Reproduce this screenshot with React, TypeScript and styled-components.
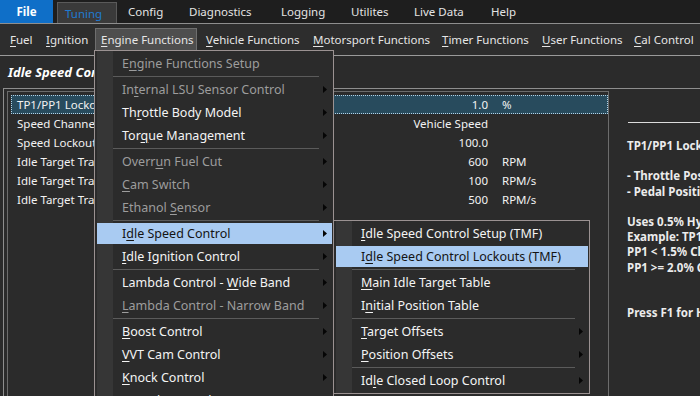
import React from 'react';
import styled, { createGlobalStyle, css } from 'styled-components';

const FONT = `"Noto Sans", "Open Sans", "DejaVu Sans", sans-serif`;

const GlobalStyle = createGlobalStyle`
  html, body { margin: 0; padding: 0; background: #2b2b2b; }
  body { font-family: ${FONT}; font-size: 11.5px; color: #f0f0f0; }
  *, *::before, *::after { box-sizing: border-box; }
  #root { width: 700px; height: 396px; overflow: hidden; }
`;

const Screen = styled.div`
  position: relative;
  width: 700px;
  height: 396px;
  overflow: hidden;
  background: #2b2b2b;
  display: flex;
  flex-direction: column;
`;

const TopBar = styled.div`
  flex: none;
  height: 24px;
  background: #1e1e1e;
  border-bottom: 1px solid #8e8e8e;
  display: flex;
  align-items: flex-end;
`;

const FileTab = styled.div`
  align-self: stretch;
  width: 53px;
  background: #0f6fc8;
  color: #ffffff;
  font-weight: 700;
  font-size: 11.5px;
  display: flex;
  align-items: center;
  justify-content: center;
`;

const TuningTab = styled.div`
  margin-left: 4px;
  width: 60px;
  height: 21px;
  background: #3a3a3a;
  border: 1px solid #5a5a5a;
  border-bottom: none;
  color: #1f7bd2;
  padding-left: 7px;
  display: flex;
  align-items: center;
`;

const TopItem = styled.div<{ $w: number }>`
  width: ${p => p.$w}px;
  height: 23px;
  padding-left: 11px;
  display: flex;
  align-items: center;
  color: #e4e4e4;
  white-space: nowrap;
`;

const ToolBar = styled.div`
  flex: none;
  height: 32px;
  background: #2d2d2d;
  border-bottom: 1px solid #9a9a9a;
  display: flex;
  align-items: flex-start;
  padding: 4px 0 0 4px;
`;

const ToolItem = styled.div<{ $w: number; $open?: boolean }>`
  flex: none;
  width: ${p => p.$w}px;
  height: 23px;
  padding-left: 6px;
  display: flex;
  align-items: center;
  white-space: nowrap;
  color: #e6e6e6;
  ${p =>
    p.$open &&
    css`
      background: #4e4e4e;
      border: 1px solid #6e6e6e;
      padding-left: 5px;
      margin-right: 3px;
    `}
`;

const Key = styled.u`
  text-decoration: underline;
  text-decoration-thickness: 1px;
  text-underline-offset: 2px;
`;

const Content = styled.div`
  flex: 1;
  display: flex;
  flex-direction: column;
  min-height: 0;
`;

const Title = styled.div`
  flex: none;
  height: 32px;
  padding-left: 8px;
  display: flex;
  align-items: center;
  font-weight: 700;
  font-style: italic;
  font-size: 13px;
  color: #ffffff;
  white-space: nowrap;
`;

const Panel = styled.div`
  flex: 1;
  min-height: 0;
  margin-left: 3px;
  border-top: 1px solid #8e8e8e;
  border-left: 1px solid #8e8e8e;
  display: flex;
  padding: 2px 0 0 3px;
`;

const GridBox = styled.div`
  flex: none;
  width: 602px;
  border: 1px solid #6c6c6c;
  border-bottom: none;
  padding: 3px 0 0 3px;
`;

const Row = styled.div<{ $selected?: boolean }>`
  height: 19px;
  display: grid;
  grid-template-columns: 351px 120px 1fr;
  align-items: center;
  padding-left: 6px;
  font-size: 11.5px;
  color: #f2f2f2;
  white-space: nowrap;
  ${p =>
    p.$selected &&
    css`
      background: #284b5d;
      outline: 1px dotted #b3d2e6;
      outline-offset: -1px;
    `}
`;

const Value = styled.span`
  text-align: right;
`;

const Unit = styled.span`
  padding-left: 14px;
`;

const Help = styled.div`
  flex: 1;
  min-width: 0;
  overflow: hidden;
  padding: 31px 0 0 18px;
`;

const HelpRule = styled.div`
  height: 1px;
  margin-left: 1px;
  background: #dcdcdc;
`;

const HelpText = styled.div`
  margin-top: 15px;
  font-weight: 700;
  line-height: 15.2px;
  white-space: pre;
  color: #ececec;
`;

const Menu = styled.div<{ $left: number; $top: number; $width: number }>`
  position: absolute;
  left: ${p => p.$left}px;
  top: ${p => p.$top}px;
  width: ${p => p.$width}px;
  z-index: 10;
  border: 1px solid #9b9292;
  padding: 1px 1px 1px 2px;
  background:
    linear-gradient(to right, transparent 2px, #363636 2px, #363636 18px, transparent 18px),
    #2b2b2b;
`;

const MenuItem = styled.div<{ $disabled?: boolean; $active?: boolean }>`
  height: 23px;
  display: flex;
  align-items: center;
  padding-left: 25px;
  white-space: nowrap;
  font-size: 12.5px;
  color: ${p => (p.$active ? '#141414' : p.$disabled ? '#9d9d9d' : '#f4f4f4')};
  background: ${p =>
    p.$active
      ? 'linear-gradient(transparent 1px, #a9cbf2 1px, #a9cbf2 22px, transparent 22px)'
      : 'transparent'};
`;

const ArrowIcon = styled.svg`
  margin-left: auto;
  margin-right: 5px;
  flex: none;
`;

const SubArrow = () => (
  <ArrowIcon width="4" height="7" viewBox="0 0 4 7">
    <polygon points="0,0 4,3.5 0,7" fill="#050505" />
  </ArrowIcon>
);

const Separator = styled.div`
  height: 1px;
  margin: 1px 13px 1px 16px;
  background: #5b5b5b;
`;

type Entry =
  | 'sep'
  | { label: string; k: number; disabled?: boolean; active?: boolean; sub?: boolean };

const Label = ({ text, k }: { text: string; k: number }) => (
  <span>
    {text.slice(0, k)}
    <Key>{text[k]}</Key>
    {text.slice(k + 1)}
  </span>
);

const mainMenu: Entry[] = [
  { label: 'Engine Functions Setup', k: 1, disabled: true },
  'sep',
  { label: 'Internal LSU Sensor Control', k: 2, disabled: true, sub: true },
  { label: 'Throttle Body Model', k: 2, sub: true },
  { label: 'Torque Management', k: 3, sub: true },
  'sep',
  { label: 'Overrun Fuel Cut', k: 5, disabled: true, sub: true },
  { label: 'Cam Switch', k: 0, disabled: true, sub: true },
  { label: 'Ethanol Sensor', k: 8, disabled: true, sub: true },
  'sep',
  { label: 'Idle Speed Control', k: 1, active: true, sub: true },
  { label: 'Idle Ignition Control', k: 0, sub: true },
  'sep',
  { label: 'Lambda Control - Wide Band', k: 17, sub: true },
  { label: 'Lambda Control - Narrow Band', k: 0, disabled: true, sub: true },
  'sep',
  { label: 'Boost Control', k: 0, sub: true },
  { label: 'VVT Cam Control', k: 0, sub: true },
  { label: 'Knock Control', k: 0, sub: true },
  { label: 'Launch Control', k: 1, sub: true },
];

const subMenu: Entry[] = [
  { label: 'Idle Speed Control Setup (TMF)', k: 0 },
  { label: 'Idle Speed Control Lockouts (TMF)', k: 1, active: true },
  'sep',
  { label: 'Main Idle Target Table', k: 0 },
  { label: 'Initial Position Table', k: 1 },
  'sep',
  { label: 'Target Offsets', k: 0, sub: true },
  { label: 'Position Offsets', k: 0, sub: true },
  'sep',
  { label: 'Idle Closed Loop Control', k: 2, sub: true },
];

const MenuList = ({ items }: { items: Entry[] }) => (
  <>
    {items.map((it, i) =>
      it === 'sep' ? (
        <Separator key={i} />
      ) : (
        <MenuItem key={i} $disabled={it.disabled} $active={it.active}>
          <Label text={it.label} k={it.k} />
          {it.sub && <SubArrow />}
        </MenuItem>
      )
    )}
  </>
);

const topItems: [string, number][] = [
  ['Config', 61],
  ['Diagnostics', 92],
  ['Logging', 70],
  ['Utilites', 63],
  ['Live Data', 77],
  ['Help', 40],
];

const toolItems: { label: string; w: number; open?: boolean }[] = [
  { label: 'Fuel', w: 36 },
  { label: 'Ignition', w: 55 },
  { label: 'Engine Functions', w: 102, open: true },
  { label: 'Vehicle Functions', w: 107 },
  { label: 'Motorsport Functions', w: 129 },
  { label: 'Timer Functions', w: 100 },
  { label: 'User Functions', w: 92 },
  { label: 'Cal Control', w: 72 },
];

const rows: { name: string; value: string; unit: string }[] = [
  { name: 'TP1/PP1 Lockout', value: '1.0', unit: '%' },
  { name: 'Speed Channel', value: 'Vehicle Speed', unit: '' },
  { name: 'Speed Lockout', value: '100.0', unit: '' },
  { name: 'Idle Target Tracking Lockout', value: '600', unit: 'RPM' },
  { name: 'Idle Target Tracking Rate Up', value: '100', unit: 'RPM/s' },
  { name: 'Idle Target Tracking Rate Down', value: '500', unit: 'RPM/s' },
];

const helpText = [
  'TP1/PP1 Lockout',
  '',
  '- Throttle Position 1',
  '- Pedal Position 1',
  '',
  'Uses 0.5% Hysteresis',
  'Example: TP1/PP1 Lockout = 2.0%',
  'PP1 < 1.5% Closed Loop Enabled',
  'PP1 >= 2.0% Closed Loop Disabled',
  '',
  '',
  'Press F1 for Help',
].join('\n');

export default function App() {
  return (
    <>
      <GlobalStyle />
      <Screen>
        <TopBar>
          <FileTab>File</FileTab>
          <TuningTab>Tuning</TuningTab>
          {topItems.map(([t, w]) => (
            <TopItem key={t} $w={w}>
              {t}
            </TopItem>
          ))}
        </TopBar>
        <ToolBar>
          {toolItems.map(t => (
            <ToolItem key={t.label} $w={t.w} $open={t.open}>
              <Label text={t.label} k={0} />
            </ToolItem>
          ))}
        </ToolBar>
        <Content>
          <Title>Idle Speed Control Lockouts</Title>
          <Panel>
            <GridBox>
              {rows.map((r, i) => (
                <Row key={r.name} $selected={i === 0}>
                  <span>{r.name}</span>
                  <Value>{r.value}</Value>
                  <Unit>{r.unit}</Unit>
                </Row>
              ))}
            </GridBox>
            <Help>
              <HelpRule />
              <HelpText>{helpText}</HelpText>
            </Help>
          </Panel>
        </Content>
        <Menu $left={94} $top={50} $width={240}>
          <MenuList items={mainMenu} />
        </Menu>
        <Menu $left={333} $top={220} $width={257}>
          <MenuList items={subMenu} />
        </Menu>
      </Screen>
    </>
  );
}
